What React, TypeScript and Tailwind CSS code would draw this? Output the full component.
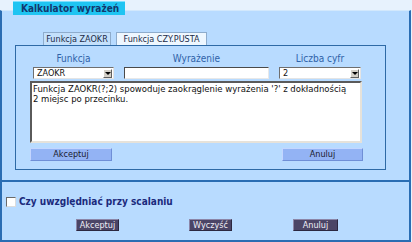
import React from "react";

const font = "font-['DejaVu_Sans_Condensed','DejaVu_Sans',sans-serif]";

function FakeSelect({ value, width }: { value: string; width: string }) {
  return (
    <div
      className={`flex h-[12px] items-center justify-between border border-t-[#6f6f6f] border-l-[#6f6f6f] border-r-[#e4e4e4] border-b-[#e4e4e4] bg-white pl-[3px] pr-px ${width}`}
    >
      <span className="text-[9px] leading-[10px] text-[#111]">{value}</span>
      <span className="flex h-[9px] w-[9px] items-center justify-center border border-t-white border-l-white border-r-[#606060] border-b-[#606060] bg-[#d4d0c8]">
        <span className="h-0 w-0 border-x-[3px] border-t-[3px] border-x-transparent border-t-black" />
      </span>
    </div>
  );
}

function BlueButton({ label, width }: { label: string; width: string }) {
  return (
    <button
      type="button"
      className={`flex h-[13px] items-center justify-center border border-t-[#c4d6ff] border-l-[#c4d6ff] border-r-[#6f8fd6] border-b-[#6f8fd6] bg-[#93b3f4] text-[9px] leading-none text-[#1a1a2e] ${width}`}
    >
      {label}
    </button>
  );
}

function DarkButton({ label, width }: { label: string; width: string }) {
  return (
    <button
      type="button"
      className={`flex h-[12px] items-center justify-center border border-t-[#8c86a8] border-l-[#8c86a8] border-r-[#2b2740] border-b-[#2b2740] bg-[#4b4566] text-[9px] leading-none text-[#eeeef6] ${width}`}
    >
      {label}
    </button>
  );
}

export default function App() {
  return (
    <div className={`h-[242px] w-[412px] bg-[#e7f2fd] pt-[10px] ${font}`}>
      <div className="relative flex h-[232px] w-[411px] flex-col border-x-2 border-b-2 border-t border-x-[#2a6db3] border-b-[#2a6db3] border-t-[#d2e8fc] bg-[#b8dbff]">
        {/* legend */}
        <div className="absolute left-[11px] top-[-10px] flex h-[14px] w-[112px] items-center border-t border-t-[#7fe0ff] bg-[#1fc4f2] pl-[8px]">
          <span className="text-[10px] font-bold leading-none text-[#12386d]">Kalkulator wyrażeń</span>
        </div>

        {/* tabs */}
        <div className="ml-[13px] mt-[21px] flex gap-[5px] pl-[28px]">
          <div className="flex h-[13px] w-[68px] items-center justify-center border border-b-0 border-[#8eaccc] bg-[#c4e0fb] text-[9px] leading-none text-[#1c2b48]">
            Funkcja ZAOKR
          </div>
          <div className="flex h-[13px] w-[91px] items-center justify-center border border-b-0 border-[#8eaccc] bg-[#eef7ff] text-[9px] leading-none text-[#1c2b48]">
            Funkcja CZY.PUSTA
          </div>
        </div>

        {/* panel */}
        <div className="ml-[13px] flex h-[125px] w-[371px] flex-col border border-[#2e6aa6] pl-[17px] pt-[7px]">
          <div className="flex gap-[10px]">
            <div className="flex w-[81px] flex-col items-center">
              <span className="h-[12px] text-[10px] leading-[12px] text-[#2f62a8]">Funkcja</span>
              <div className="mt-[2px]">
                <FakeSelect value="ZAOKR" width="w-[81px]" />
              </div>
            </div>
            <div className="flex w-[145px] flex-col items-center">
              <span className="h-[12px] text-[10px] leading-[12px] text-[#2f62a8]">Wyrażenie</span>
              <div className="mt-[2px] h-[12px] w-[145px] border border-t-[#4a4a4a] border-l-[#4a4a4a] border-r-[#e8e8e8] border-b-[#e8e8e8] bg-white" />
            </div>
            <div className="flex w-[82px] flex-col items-center">
              <span className="h-[12px] text-[10px] leading-[12px] text-[#2f62a8]">Liczba cyfr</span>
              <div className="mt-[2px]">
                <FakeSelect value="2" width="w-[82px]" />
              </div>
            </div>
          </div>

          <div className="-ml-[3px] mt-[2px] h-[62px] w-[332px] overflow-hidden whitespace-nowrap border-2 border-t-[#5a5a5a] border-l-[#5a5a5a] border-r-[#e6e2da] border-b-[#e6e2da] bg-white px-px pt-px font-['DejaVu_Sans',sans-serif] text-[8.5px] leading-[10px] text-[#111]">
            Funkcja ZAOKR(?;2) spowoduje zaokrąglenie wyrażenia '?' z dokładnością
            <br />2 miejsc po przecinku.
          </div>

          <div className="-ml-[3px] mt-[5px] flex w-[333px] justify-between">
            <BlueButton label="Akceptuj" width="w-[82px]" />
            <BlueButton label="Anuluj" width="w-[81px]" />
          </div>
        </div>

        {/* separator */}
        <div className="mt-[10px] h-[2px] w-full bg-[#2a6db3]" />

        {/* checkbox */}
        <div className="ml-[4px] mt-[15px] flex items-center gap-[3px]">
          <span className="h-[10px] w-[10px] border border-t-[#6a6a6a] border-l-[#6a6a6a] border-r-[#dcdcdc] border-b-[#dcdcdc] bg-white" />
          <span className="text-[10px] font-bold leading-none text-[#1b2a7c]">Czy uwzględniać przy scalaniu</span>
        </div>

        {/* bottom buttons */}
        <div className="ml-[74px] mt-[12px] flex">
          <DarkButton label="Akceptuj" width="w-[43px]" />
          <div className="ml-[70px]">
            <DarkButton label="Wyczyść" width="w-[43px]" />
          </div>
          <div className="ml-[61px]">
            <DarkButton label="Anuluj" width="w-[45px]" />
          </div>
        </div>
      </div>
    </div>
  );
}
